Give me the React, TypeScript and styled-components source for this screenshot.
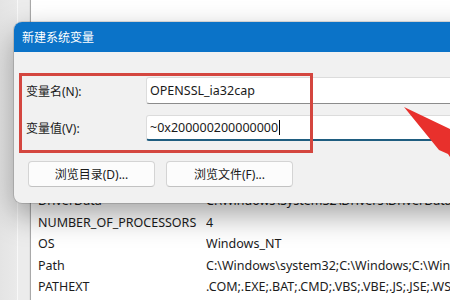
import styled, {createGlobalStyle} from "styled-components";

const GlobalStyle = createGlobalStyle`
    html, body {
        margin: 0;
        padding: 0;
        width: 450px;
        height: 300px;
        overflow: hidden;
        background: #fff;
    }
    * {
        box-sizing: border-box;
    }
`;

const font = `"Noto Sans", "Noto Sans CJK SC", sans-serif`;

const envRows = [
    {name: "DriverData", value: "C:\\Windows\\System32\\Drivers\\DriverData"},
    {name: "NUMBER_OF_PROCESSORS", value: "4"},
    {name: "OS", value: "Windows_NT"},
    {name: "Path", value: "C:\\Windows\\system32;C:\\Windows;C:\\Windows\\System32\\Wbem"},
    {name: "PATHEXT", value: ".COM;.EXE;.BAT;.CMD;.VBS;.VBE;.JS;.JSE;.WSF;.WSH;.MSC"},
];

export default function App() {
    return (
        <>
            <GlobalStyle/>
            <Screen>
                <BackWindow>
                    <SidePane>
                        <SideStripe/>
                        <SideStripe light/>
                    </SidePane>
                    <ListPane>
                        {envRows.map(row => (
                            <ListRow key={row.name}>
                                <NameCell>{row.name}</NameCell>
                                <ValueCell>{row.value}</ValueCell>
                            </ListRow>
                        ))}
                    </ListPane>
                </BackWindow>

                <Dialog>
                    <TitleBar>新建系统变量</TitleBar>
                    <DialogBody>
                        <FieldGrid>
                            <Label>变量名(N):</Label>
                            <Field>OPENSSL_ia32cap</Field>
                            <Label>变量值(V):</Label>
                            <Field focused>~0x200000200000000<Caret/></Field>
                        </FieldGrid>
                        <ButtonRow>
                            <DlgButton>浏览目录(D)...</DlgButton>
                            <DlgButton>浏览文件(F)...</DlgButton>
                        </ButtonRow>
                    </DialogBody>
                    <RedFrame/>
                </Dialog>

                <Arrow width="50" height="60" viewBox="0 0 50 60">
                    <polygon points="0,0 50,24 50,56 44,47 35,43" fill="#e8302c"/>
                </Arrow>
            </Screen>
        </>
    );
}

const Screen = styled.div`
    position: relative;
    width: 450px;
    height: 300px;
    overflow: hidden;
    font-family: ${font};
    color: #1a1a1a;
`;

const BackWindow = styled.div`
    display: flex;
    height: 100%;
`;

const SidePane = styled.div`
    display: flex;
    width: 31px;
    border-right: 1px solid #a9a9a9;
    background: linear-gradient(90deg, #e4e4e4, #eeeeee);
`;

const SideStripe = styled.div<{ light?: boolean }>`
    width: ${p => (p.light ? "12px" : "18px")};
    border-right: 1px solid ${p => (p.light ? "#e2e2e2" : "#f8f8f8")};
    background: ${p => (p.light ? "#ececec" : "transparent")};
`;

const ListPane = styled.div`
    flex: 1;
    padding-top: 190px;
    padding-left: 7px;
    background: #fff;
`;

const ListRow = styled.div`
    display: grid;
    grid-template-columns: 168px 1fr;
    height: 21.5px;
    align-items: center;
    font-size: 12.5px;
    white-space: nowrap;
    color: #1c1c1c;
`;

const NameCell = styled.span`
    overflow: hidden;
`;

const ValueCell = styled.span`
    overflow: hidden;
`;

const Dialog = styled.div`
    position: absolute;
    left: 14px;
    top: 22px;
    width: 540px;
    border-radius: 8px 8px 0 8px;
    background: #f1f1f1;
    box-shadow: 0 12px 30px rgba(0, 0, 0, 0.36), 0 0 0 1px rgba(0, 0, 0, 0.12);
`;

const TitleBar = styled.div`
    height: 30px;
    padding-left: 8px;
    display: flex;
    align-items: center;
    font-size: 12px;
    color: #fff;
    background: #0b73c8;
    border-radius: 8px 8px 0 0;
`;

const DialogBody = styled.div`
    padding: 25px 0 16px 12px;
`;

const FieldGrid = styled.div`
    display: grid;
    grid-template-columns: 120px 1fr;
    grid-template-rows: 27px 26px;
    row-gap: 11px;
    align-items: center;
`;

const Label = styled.span`
    font-size: 12px;
    color: #1a1a1a;
`;

const Field = styled.div<{ focused?: boolean }>`
    height: 100%;
    display: flex;
    align-items: center;
    padding-left: 3px;
    font-size: 12.5px;
    background: #fff;
    border: 1px solid #dcdcdc;
    border-bottom: ${p => (p.focused ? "2px solid #1f5d80" : "1px solid #8c8c8c")};
    border-radius: 3px;
`;

const Caret = styled.span`
    display: inline-block;
    width: 1px;
    height: 15px;
    margin-left: 1px;
    background: #000;
`;

const ButtonRow = styled.div`
    display: flex;
    gap: 11px;
    margin-top: 20px;
    padding-left: 2px;
`;

const DlgButton = styled.button`
    width: 127px;
    height: 26px;
    font-family: ${font};
    font-size: 12px;
    color: #1a1a1a;
    background: #fcfcfc;
    border: 1px solid #d4d4d4;
    border-bottom-color: #c2c2c2;
    border-radius: 4px;
    padding: 0;
`;

const RedFrame = styled.div`
    position: absolute;
    left: 5px;
    top: 51px;
    width: 294px;
    height: 80px;
    border: 3px solid #d4463f;
    pointer-events: none;
`;

const Arrow = styled.svg`
    position: absolute;
    left: 404px;
    top: 107px;
`;
